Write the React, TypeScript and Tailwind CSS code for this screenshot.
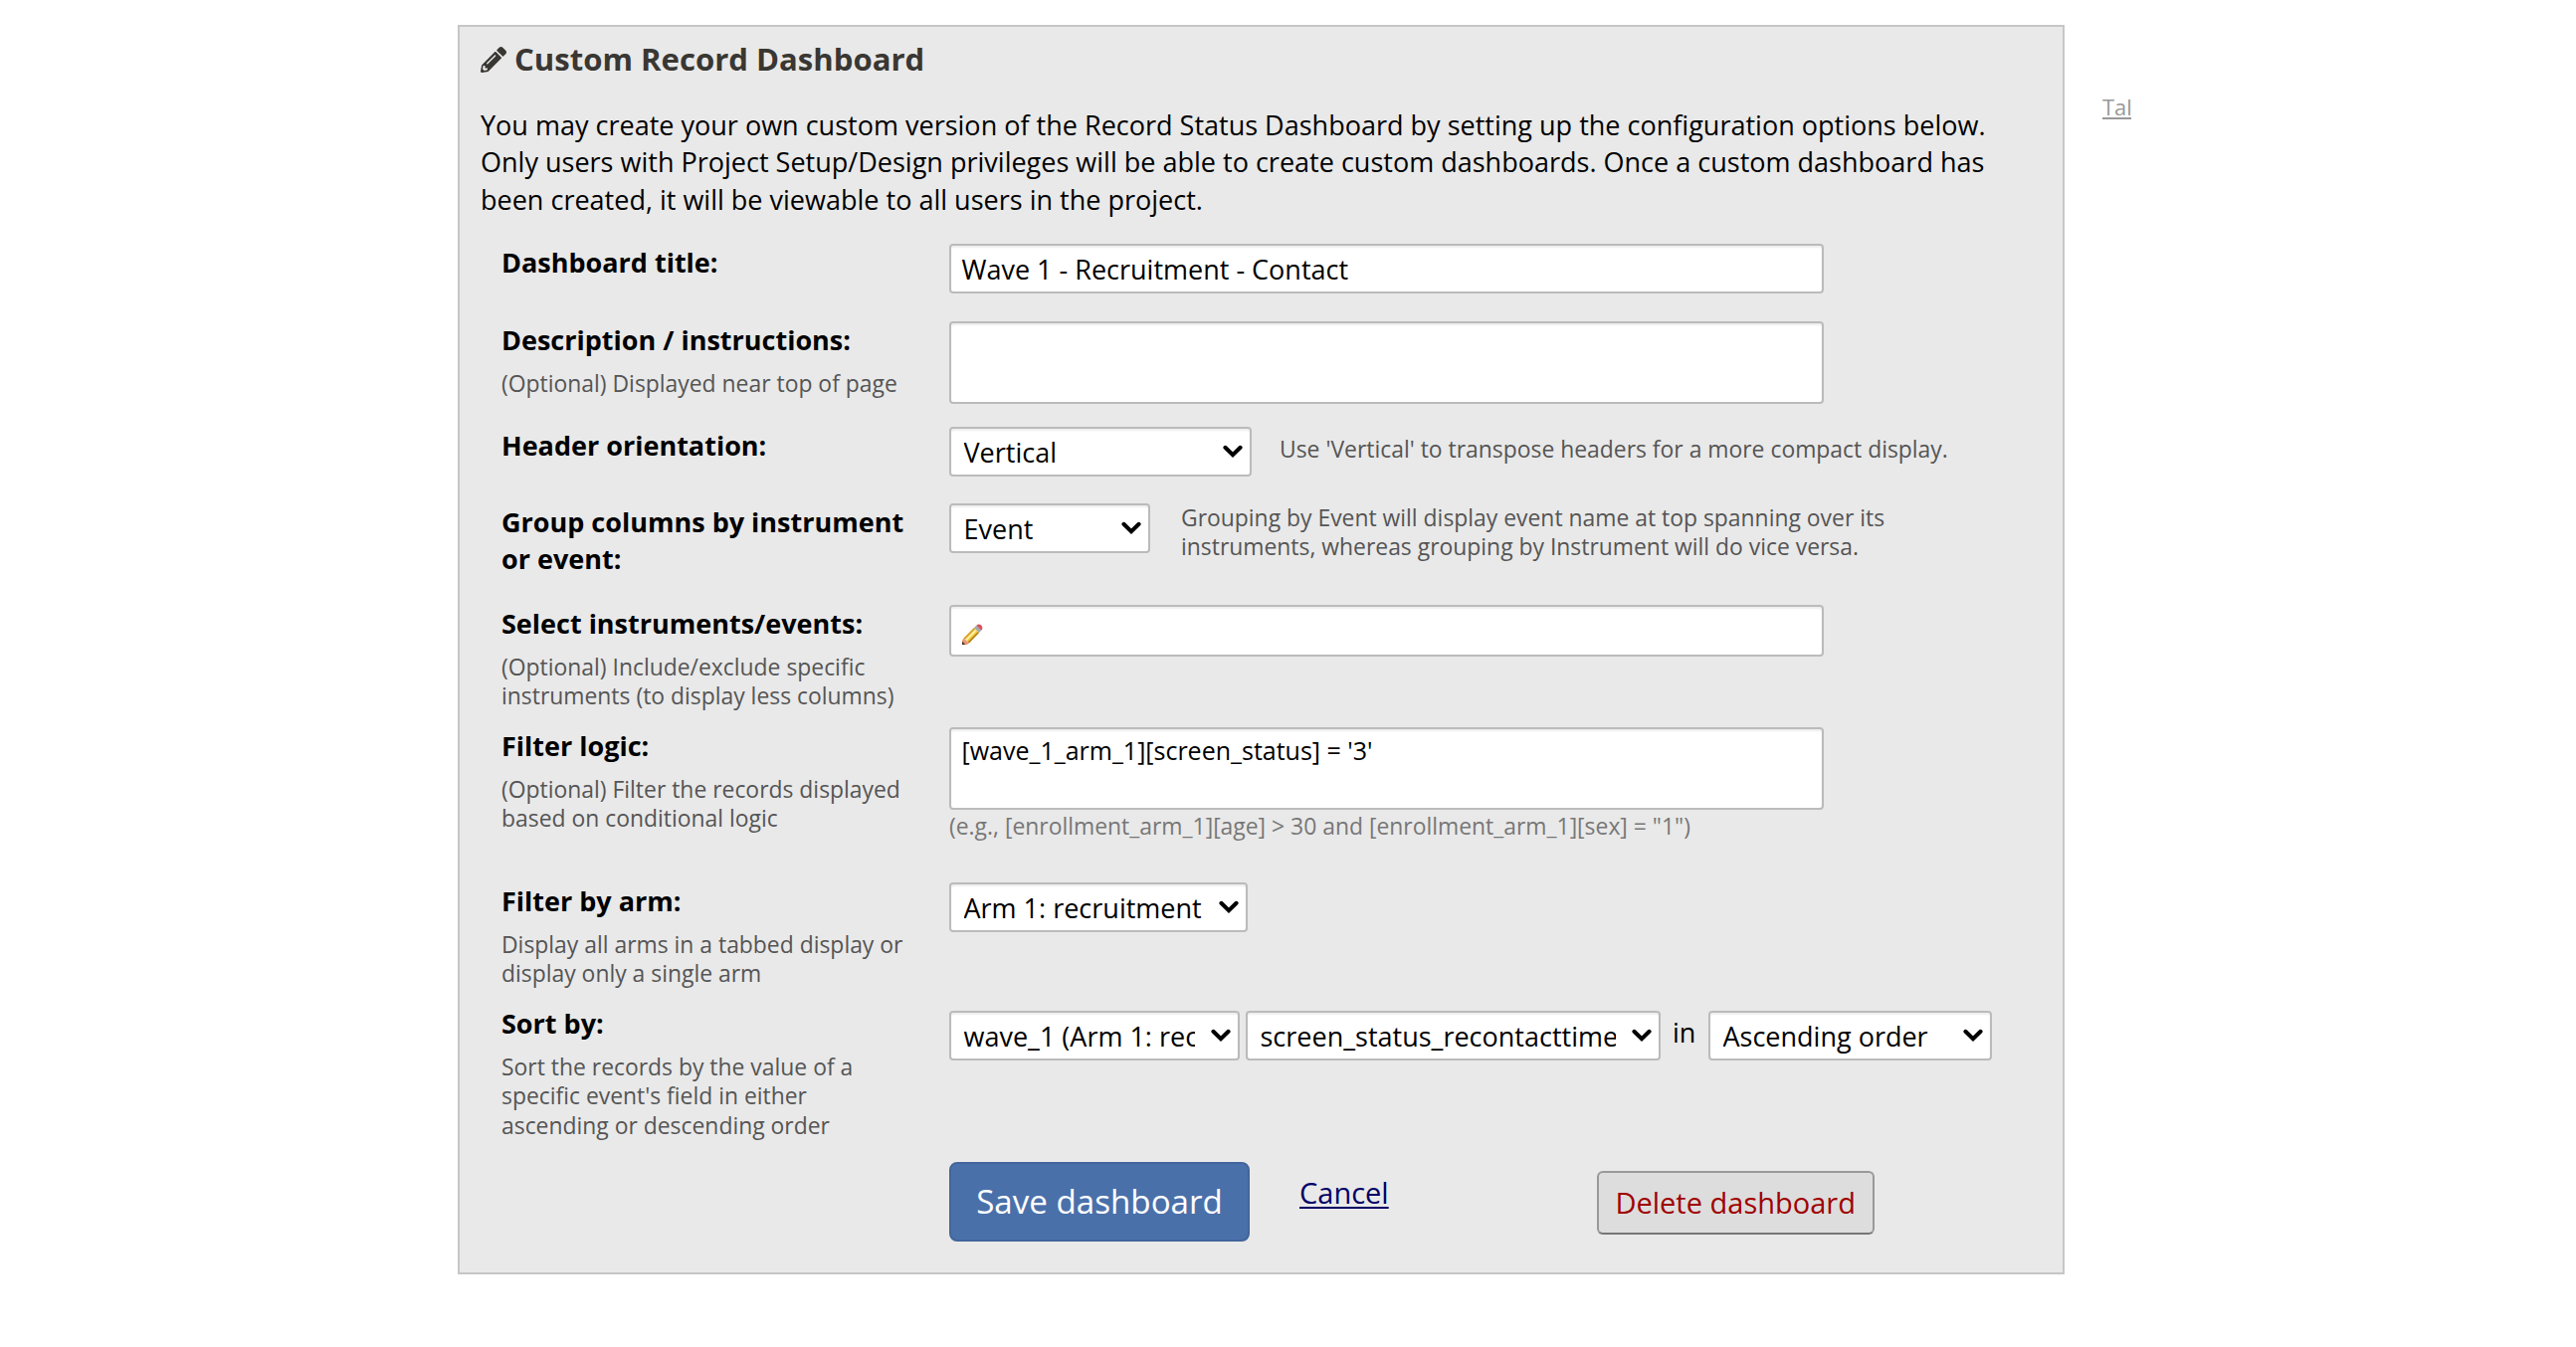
import type { ReactNode } from "react";

function Chevron() {
  return (
    <svg viewBox="0 0 20 14" className="h-[14px] w-5 shrink-0" fill="none" stroke="#000" strokeWidth="4" strokeLinecap="round" strokeLinejoin="miter">
      <path d="M2.4 2.8 L10 10.2 L17.6 2.8" />
    </svg>
  );
}

const box = "rounded-[4px] border-2 border-[#bbbbbb] bg-white shadow-[inset_0_2px_2px_rgba(0,0,0,0.07)]";

function Select({ label, className }: { label: string; className: string }) {
  return (
    <div className={`flex h-[50px] items-center pr-[7px] pl-[12.5px] text-[27px] leading-[37px] text-black ${box} ${className}`}>
      <div className="mr-[16.5px] min-w-0 flex-1 overflow-hidden pt-px whitespace-nowrap">{label}</div>
      <Chevron />
    </div>
  );
}

function Row({ className, label, note, children }: { className: string; label: ReactNode; note?: ReactNode; children: ReactNode }) {
  return (
    <div className={`flex ${className}`}>
      <div className="w-[450px] shrink-0">
        <div className="text-[27px] leading-[37.5px] font-bold text-black">{label}</div>
        {note && <div className="mt-[11px] text-[22.9px] leading-[29.3px] text-[#555]">{note}</div>}
      </div>
      <div className="min-w-0 flex-1">{children}</div>
    </div>
  );
}

function HeadingPencil() {
  return (
    <svg viewBox="0 0 512 512" className="h-[26px] w-[26px]" fill="#393733">
      <path d="M497.9 142.1l-46.1 46.1c-4.7 4.7-12.3 4.7-17 0l-111-111c-4.7-4.7-4.7-12.3 0-17l46.1-46.1c18.7-18.7 49.1-18.7 67.9 0l60.1 60.1c18.8 18.7 18.8 49.1 0 67.9zM284.2 99.8L21.6 362.4.4 483.9c-2.9 16.4 11.4 30.6 27.8 27.8l121.5-21.3 262.6-262.6c4.7-4.7 4.7-12.3 0-17l-111-111c-4.8-4.7-12.4-4.7-17.1 0zM124.1 339.9c-5.5-5.5-5.5-14.3 0-19.8l154-154c5.5-5.5 14.3-5.5 19.8 0s5.5 14.3 0 19.8l-154 154c-5.5 5.5-14.3 5.5-19.8 0zM88 424h48v36.3l-64.5 11.3-31.1-31.1L51.7 376H88v48z" />
    </svg>
  );
}

function ColorPencil() {
  return (
    <svg viewBox="0 0 22 22" className="h-[22px] w-[22px]">
      <path d="M2.500 14.500 L13 4 L18 9 L8 19.500 Z" fill="#f3c63a" />
      <path d="M2.500 14.500 L13 4 L14.700 5.700 L4.300 16.300 Z" fill="#d9a531" />
      <path d="M4 15.800 L14.200 5.500 L15.800 7.100 L5.600 17.300 Z" fill="#fdf0a0" />
      <path d="M6.800 18.300 L17 8 L18 9 L8 19.500 Z" fill="#b5801c" />
      <path d="M13 4 L15.300 1.700 L20.300 6.700 L18 9 Z" fill="#a3a9ae" />
      <path d="M15.300 1.700 L17 .6 Q21.400 .6 21.400 5 L20.300 6.700 Z" fill="#d9535c" />
      <path d="M2.500 14.500 L8 19.500 L6 21 L1 21 L1 17 Z" fill="#e39a75" />
      <path d="M1 17.800 L4.300 21 L1 21 Z" fill="#4a3026" />
    </svg>
  );
}

export default function App() {
  return (
    <div className="flex h-[1354px] w-[2589px] items-start overflow-hidden bg-white pt-[25px] pl-[460px] font-['Open_Sans',sans-serif]">
      <main className="h-[1256px] w-[1615px] shrink-0 border-2 border-[#c5c7c5] bg-[#e9e9e9] pl-[21px]">
        <h1 className="flex h-[45px] items-center pt-[19px] text-[31.1px] leading-[42px] font-bold text-[#393733]">
          <span className="mt-[2px] mr-[8px]"><HeadingPencil /></span>
          Custom Record Dashboard
        </h1>
        <p className="mt-[34.5px] text-[27.03px] leading-[37.5px] whitespace-nowrap text-black">
          You may create your own custom version of the Record Status Dashboard by setting up the configuration options below.
          <br />
          Only users with Project Setup/Design privileges will be able to create custom dashboards. Once a custom dashboard has
          <br />
          been created, it will be viewable to all users in the project.
        </p>

        <div className="mt-[26px] pl-[21px]">
          <Row className="h-[77.500px]" label="Dashboard title:">
            <div className={`flex h-[50px] w-[879px] items-center pt-px pl-[10.5px] text-[27px] leading-[37px] text-black ${box}`}>
              Wave 1 - Recruitment - Contact
            </div>
          </Row>
          <Row className="h-[106px]" label="Description / instructions:" note="(Optional) Displayed near top of page">
            <div className={`h-[83px] w-[879px] ${box}`} />
          </Row>
          <Row className="h-[77px]" label="Header orientation:">
            <div className="flex">
              <Select label="Vertical" className="w-[304px]" />
              <div className="mt-[8px] ml-[28px] text-[22.9px] leading-[29.3px] text-[#555]">
                Use 'Vertical' to transpose headers for a more compact display.
              </div>
            </div>
          </Row>
          <Row className="h-[102px]" label={<>Group columns by instrument<br />or event:</>}>
            <div className="flex">
              <Select label="Event" className="w-[202px]" />
              <div className="ml-[31px] text-[22.9px] leading-[29.3px] whitespace-nowrap text-[#555]">
                Grouping by Event will display event name at top spanning over its
                <br />
                instruments, whereas grouping by Instrument will do vice versa.
              </div>
            </div>
          </Row>
          <Row className="h-[123px]" label="Select instruments/events:" note={<>(Optional) Include/exclude specific<br />instruments (to display less columns)</>}>
            <div className={`h-[52px] w-[879px] pt-[17px] pl-[10px] ${box}`}><ColorPencil /></div>
          </Row>
          <Row className="h-[156px]" label="Filter logic:" note={<>(Optional) Filter the records displayed<br />based on conditional logic</>}>
            <div className={`h-[83px] w-[879px] pt-[3px] pl-[10.500px] text-[25px] leading-[37px] text-black ${box}`}>
              [wave_1_arm_1][screen_status] = '3'
            </div>
            <div className="mt-[2px] text-[22.9px] leading-[29.3px] text-[#777]">
              (e.g., [enrollment_arm_1][age] &gt; 30 and [enrollment_arm_1][sex] = "1")
            </div>
          </Row>
          <Row className="h-[123px]" label="Filter by arm:" note={<>Display all arms in a tabbed display or<br />display only a single arm</>}>
            <Select label="Arm 1: recruitment" className="w-[300px]" />
          </Row>
          <Row className="h-[158px]" label="Sort by:" note={<>Sort the records by the value of a<br />specific event's field in either<br />ascending or descending order</>}>
            <div className="flex pt-[6px]">
              <Select label="wave_1 (Arm 1: rec" className="w-[292px]" />
              <Select label="screen_status_recontacttime" className="ml-[6px] w-[417px]" />
              <span className="mt-[3px] ml-[12px] w-[36px] text-[27px] leading-[37.5px] text-black">in</span>
              <Select label="Ascending order" className="w-[285px]" />
            </div>
          </Row>
          <div className="flex items-start pl-[450px]">
            <button className="h-[80px] w-[302px] rounded-[8px] border-2 border-[#42659b] bg-[#4a70aa] text-[33.15px] leading-[45px] whitespace-nowrap text-white">
              Save dashboard
            </button>
            <a className="mt-[11px] ml-[50px] text-[29px] leading-[40px] text-[#000066] underline decoration-2 underline-offset-[3px]">Cancel</a>
            <button className="mt-[9px] ml-[209px] h-[64px] w-[279px] rounded-[6px] border-2 border-[#999999] border-b-[#777777] bg-[#dddddd] pt-px text-[29px] leading-[40px] whitespace-nowrap text-[#a00000]">
              Delete dashboard
            </button>
          </div>
        </div>
      </main>
      <a className="mt-[67px] ml-[38px] w-[28.500px] overflow-hidden text-[22px] leading-[30px] text-[#999] underline decoration-2 underline-offset-[2px]">Tal</a>
    </div>
  );
}
